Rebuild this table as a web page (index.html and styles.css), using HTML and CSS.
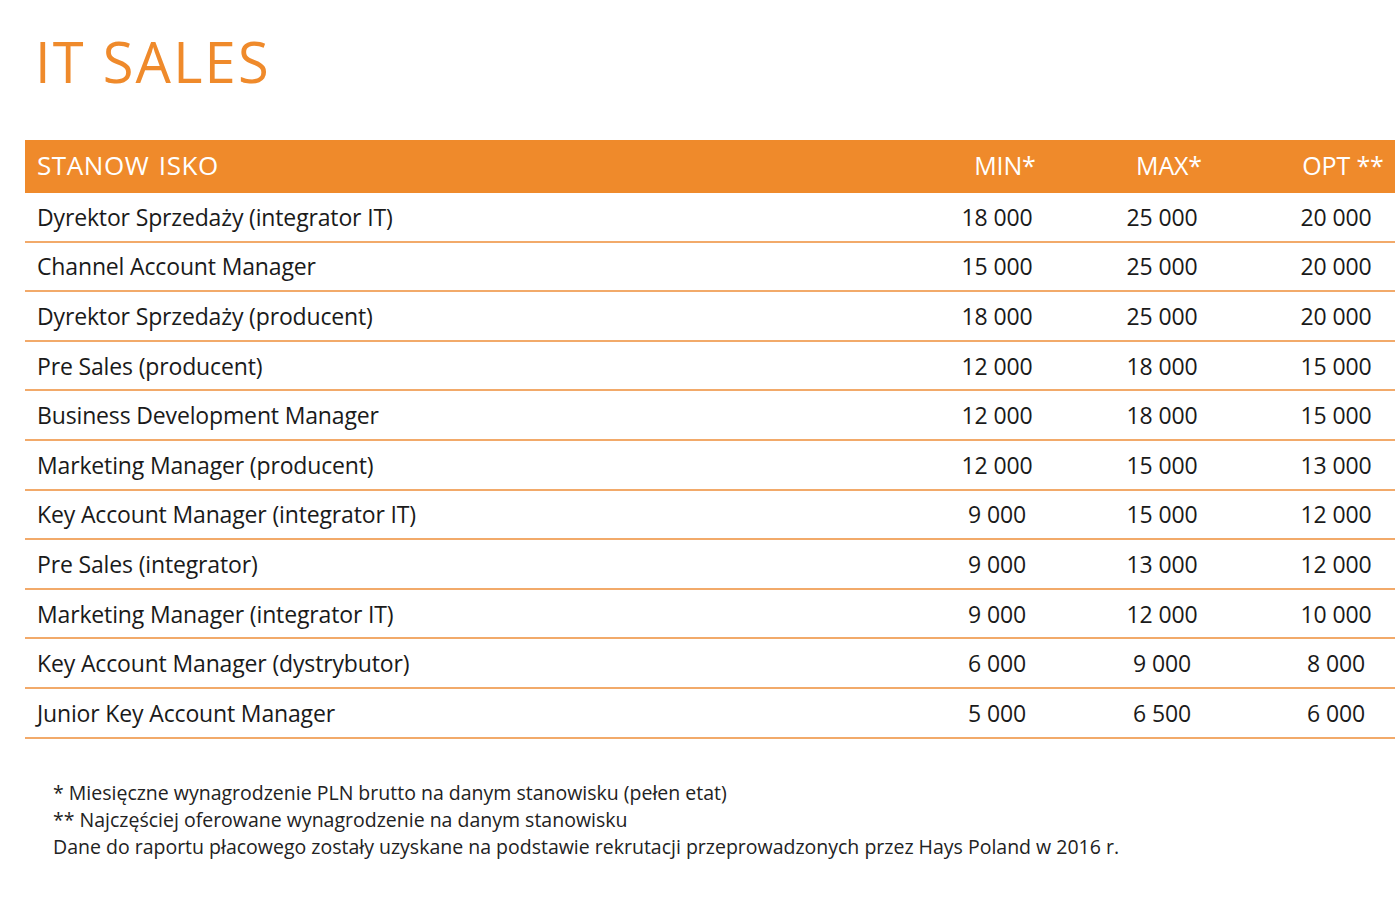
FILE: index.html
```html
<!DOCTYPE html>
<html lang="pl">
<head>
<meta charset="utf-8">
<title>IT Sales</title>
<link rel="stylesheet" href="styles.css">
</head>
<body>
<div class="page">
  <h1 class="title">IT SALES</h1>
  <div class="table">
    <div class="row head">
      <div class="name">STANOW ISKO</div>
      <div class="num min">MIN*</div>
      <div class="num max">MAX*</div>
      <div class="num opt">OPT **</div>
    </div>
    <div class="row"><div class="name">Dyrektor Sprzedaży (integrator IT)</div><div class="num">18 000</div><div class="num">25 000</div><div class="num">20 000</div></div>
    <div class="row"><div class="name">Channel Account Manager</div><div class="num">15 000</div><div class="num">25 000</div><div class="num">20 000</div></div>
    <div class="row"><div class="name">Dyrektor Sprzedaży (producent)</div><div class="num">18 000</div><div class="num">25 000</div><div class="num">20 000</div></div>
    <div class="row"><div class="name">Pre Sales (producent)</div><div class="num">12 000</div><div class="num">18 000</div><div class="num">15 000</div></div>
    <div class="row"><div class="name">Business Development Manager</div><div class="num">12 000</div><div class="num">18 000</div><div class="num">15 000</div></div>
    <div class="row"><div class="name">Marketing Manager (producent)</div><div class="num">12 000</div><div class="num">15 000</div><div class="num">13 000</div></div>
    <div class="row"><div class="name">Key Account Manager (integrator IT)</div><div class="num">9 000</div><div class="num">15 000</div><div class="num">12 000</div></div>
    <div class="row"><div class="name">Pre Sales (integrator)</div><div class="num">9 000</div><div class="num">13 000</div><div class="num">12 000</div></div>
    <div class="row"><div class="name">Marketing Manager (integrator IT)</div><div class="num">9 000</div><div class="num">12 000</div><div class="num">10 000</div></div>
    <div class="row"><div class="name">Key Account Manager (dystrybutor)</div><div class="num">6 000</div><div class="num">9 000</div><div class="num">8 000</div></div>
    <div class="row"><div class="name">Junior Key Account Manager</div><div class="num">5 000</div><div class="num">6 500</div><div class="num">6 000</div></div>
  </div>
  <div class="notes">
    <p>* Miesięczne wynagrodzenie PLN brutto na danym stanowisku (pełen etat)</p>
    <p>** Najczęściej oferowane wynagrodzenie na danym stanowisku</p>
    <p>Dane do raportu płacowego zostały uzyskane na podstawie rekrutacji przeprowadzonych przez Hays Poland w 2016 r.</p>
  </div>
</div>
</body>
</html>
```
FILE: styles.css
```css
html, body {
  margin: 0;
  padding: 0;
  background: #ffffff;
}
body {
  font-family: "Open Sans", "Noto Sans", sans-serif;
  color: #1a1a1a;
}
.page {
  width: 1400px;
  height: 908px;
  padding: 0 5px 0 25px;
  box-sizing: border-box;
}
.title {
  margin: 0;
  padding: 28px 0 0 10px;
  height: 112px;
  box-sizing: border-box;
  font-weight: 400;
  font-size: 56px;
  line-height: 66px;
  letter-spacing: 2.2px;
  color: #ef8a2b;
}
.table {
  display: flex;
  flex-direction: column;
}
.row {
  display: grid;
  grid-template-columns: 1fr 100px 230px 118px;
  align-items: center;
  height: 49.6px;
  box-sizing: border-box;
  border-bottom: 2px solid #f2aa6a;
  font-size: 23px;
  letter-spacing: -0.15px;
}
.row.head {
  height: 53px;
  background: #ef8a2b;
  color: #ffffff;
  border-bottom: none;
  font-size: 25px;
  margin-top: 28px;
  padding-bottom: 4px;
}
.name {
  padding-left: 12px;
  white-space: nowrap;
}
.head .name {
  font-size: 26px;
  letter-spacing: 0.6px;
  word-spacing: 2px;
}
.num {
  text-align: center;
  white-space: nowrap;
}
.head .min { padding-left: 16px; }
.head .max { padding-left: 14px; }
.head .opt { padding-left: 14px; }
.notes {
  padding: 40px 0 0 28px;
  font-size: 19.5px;
  line-height: 27px;
  color: #222222;
}
.notes p {
  margin: 0;
}
```
